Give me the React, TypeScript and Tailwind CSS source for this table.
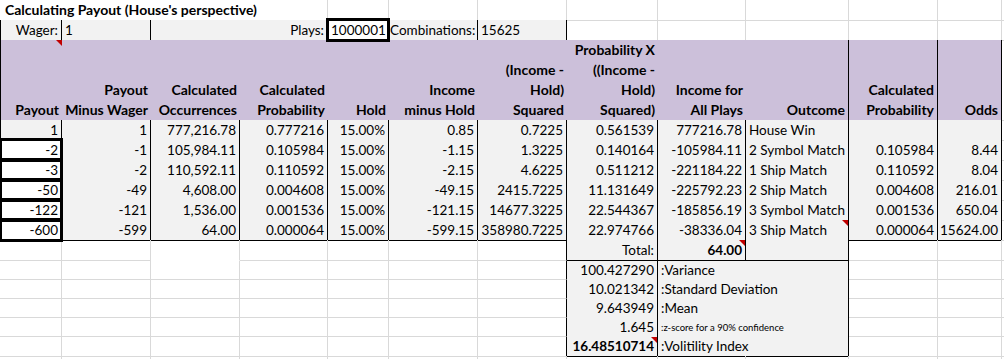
import clsx from 'clsx';
import type { ReactNode } from 'react';

const ROW = 'grid grid-cols-[62px_89px_89px_88px_61px_89px_89px_91px_88px_103px_89px_64px_2px]';

type Side = 'k' | 'g' | 'w' | 'n';

const RIGHT: Record<Side, string> = {
  k: 'border-r border-r-black',
  g: 'border-r border-r-[#d9d9d9]',
  w: 'border-r border-r-white',
  n: '',
};

const BOTTOM: Record<Side, string> = {
  k: 'border-b border-b-black',
  g: 'border-b border-b-[#d9d9d9]',
  w: 'border-b border-b-white',
  n: '',
};

interface CellProps {
  children?: ReactNode;
  className?: string;
  r?: Side;
  b?: Side;
  left?: boolean;
  right?: boolean;
  flag?: boolean;
  boxed?: boolean;
}

function Flag() {
  return (
    <span className="absolute right-0 top-0 h-0 w-0 border-l-[6px] border-t-[6px] border-l-transparent border-t-[#c00000]" />
  );
}

function Cell({ children, className, r = 'g', b = 'g', left, right, flag, boxed }: CellProps) {
  return (
    <div
      className={clsx(
        'relative flex items-end whitespace-nowrap px-[3px]',
        right ? 'justify-end' : 'justify-start',
        RIGHT[r],
        BOTTOM[b],
        left && 'border-l border-l-black',
        className,
      )}
    >
      {children}
      {flag && <Flag />}
      {/* thick selection-style box sitting over the gridlines */}
      {boxed && <span className="pointer-events-none absolute -inset-[2px] z-10 border-[3px] border-black" />}
    </div>
  );
}

const rows = [
  ['1', '1', '777,216.78', '0.777216', '15.00%', '0.85', '0.7225', '0.561539', '777216.78', 'House Win', '', ''],
  ['-2', '-1', '105,984.11', '0.105984', '15.00%', '-1.15', '1.3225', '0.140164', '-105984.11', '2 Symbol Match', '0.105984', '8.44'],
  ['-3', '-2', '110,592.11', '0.110592', '15.00%', '-2.15', '4.6225', '0.511212', '-221184.22', '1 Ship Match', '0.110592', '8.04'],
  ['-50', '-49', '4,608.00', '0.004608', '15.00%', '-49.15', '2415.7225', '11.131649', '-225792.23', '2 Ship Match', '0.004608', '216.01'],
  ['-122', '-121', '1,536.00', '0.001536', '15.00%', '-121.15', '14677.3225', '22.544367', '-185856.19', '3 Symbol Match', '0.001536', '650.04'],
  ['-600', '-599', '64.00', '0.000064', '15.00%', '-599.15', '358980.7225', '22.974766', '-38336.04', '3 Ship Match', '0.000064', '15624.00'],
];

const headers: string[][] = [
  ['Payout'],
  ['Payout', 'Minus Wager'],
  ['Calculated', 'Occurrences'],
  ['Calculated', 'Probability'],
  ['Hold'],
  ['Income', 'minus Hold'],
  ['(Income -', 'Hold)', 'Squared'],
  ['Probability X', '((Income -', 'Hold)', 'Squared)'],
  ['Income for', 'All Plays'],
  ['Outcome'],
  ['Calculated', 'Probability'],
  ['Odds'],
];

const stats = [
  { value: '100.427290', label: ':Variance' },
  { value: '10.021342', label: ':Standard Deviation' },
  { value: '9.643949', label: ':Mean' },
  { value: '1.645', label: ':z-score for a 90% confidence', small: true },
  { value: '16.48510714', label: ':Volitility Index', bold: true },
];

export default function App() {
  return (
    <div className="h-[359px] w-[1004px] overflow-hidden bg-white font-['Lato',sans-serif] text-[13.5px] leading-[20px] text-black">
      {/* title */}
      <div className={clsx(ROW, 'h-[20px]')}>
        <Cell className="col-span-4 pl-[5px] text-[14px] font-bold" b="k">
          Calculating Payout (House's perspective)
        </Cell>
        <Cell b="k" />
        <Cell b="k" />
        <Cell b="k" />
        <Cell />
        <Cell />
        <Cell />
        <Cell />
        <Cell />
        <Cell r="n" />
      </div>

      {/* inputs */}
      <div className={clsx(ROW, 'h-[20px]')}>
        <Cell left r="k" b="k" right className="bg-[#f2f2f2]">
          Wager:
        </Cell>
        <Cell r="k" b="k" className="bg-[#f2f2f2]">
          1
        </Cell>
        <Cell r="k" b="k" right className="col-span-2 bg-[#f2f2f2]">
          Plays:
        </Cell>
        <Cell r="k" b="k" boxed className="bg-white">
          1000001
        </Cell>
        <Cell r="k" b="k" className="bg-[#f2f2f2] pl-[1px]">
          Combinations:
        </Cell>
        <Cell r="k" b="k" className="bg-[#f2f2f2]">
          15625
        </Cell>
        <Cell b="k" />
        <Cell b="k" />
        <Cell b="k" />
        <Cell b="k" />
        <Cell b="k" />
        <Cell r="n" />
      </div>

      {/* column headers */}
      <div className={clsx(ROW, 'h-[80px]')}>
        {headers.map((lines, i) => (
          <Cell
            key={i}
            left={i === 0}
            r={i >= 9 ? 'k' : 'n'}
            b="k"
            right
            flag={i === 0}
            className="flex-col items-end justify-end bg-[#ccc0da] text-[14px] font-bold"
          >
            {lines.map((line) => (
              <span key={line}>{line}</span>
            ))}
          </Cell>
        ))}
        <Cell r="n" />
      </div>

      {/* payout rows */}
      {rows.map((row, ri) => (
        <div key={ri} className={clsx(ROW, 'h-[20px]')}>
          {row.map((v, ci) => (
            <Cell
              key={ci}
              left={ci === 0}
              r="k"
              b="k"
              right={ci !== 9}
              flag={ri === 5 && ci === 9}
              boxed={ci === 0 && ri > 0}
              className={ci === 0 && ri > 0 ? 'bg-white' : 'bg-[#f2f2f2]'}
            >
              {v}
            </Cell>
          ))}
          <Cell r="n" />
        </div>
      ))}

      {/* total */}
      <div className={clsx(ROW, 'h-[21px]')}>
        <Cell />
        <Cell />
        <Cell b="w" />
        <Cell />
        <Cell />
        <Cell />
        <Cell r="k" />
        <Cell r="k" b="k" right className="bg-[#f2f2f2]">
          Total:
        </Cell>
        <Cell r="k" b="k" right flag className="bg-[#f2f2f2] font-bold">
          64.00
        </Cell>
        <Cell r="k" b="k" className="bg-[#f2f2f2]" />
        <Cell />
        <Cell />
        <Cell r="n" />
      </div>

      {/* summary statistics */}
      {stats.map((s, i) => {
        const last = i === stats.length - 1;
        return (
          <div key={s.label} className={clsx(ROW, 'h-[19px] leading-[19px]')}>
            <Cell />
            <Cell />
            <Cell />
            <Cell />
            <Cell />
            <Cell />
            <Cell r="k" />
            <Cell r="k" b={last ? 'k' : 'n'} right flag={last} className={clsx('bg-[#f2f2f2]', s.bold && 'font-bold')}>
              {s.value}
            </Cell>
            <Cell r="k" b={last ? 'k' : 'n'} className={clsx('col-span-2 bg-[#f2f2f2]', s.small && 'text-[9.5px]')}>
              {s.label}
            </Cell>
            <Cell />
            <Cell />
            <Cell r="n" />
          </div>
        );
      })}

      <div className={clsx(ROW, 'h-[3px]')}>
        <Cell b="n" />
        <Cell b="n" />
        <Cell b="n" />
        <Cell b="n" />
        <Cell b="n" />
        <Cell b="n" />
        <Cell b="n" />
        <Cell b="n" />
        <Cell b="n" />
        <Cell b="n" />
        <Cell b="n" />
        <Cell b="n" />
        <Cell r="n" b="n" />
      </div>
    </div>
  );
}
